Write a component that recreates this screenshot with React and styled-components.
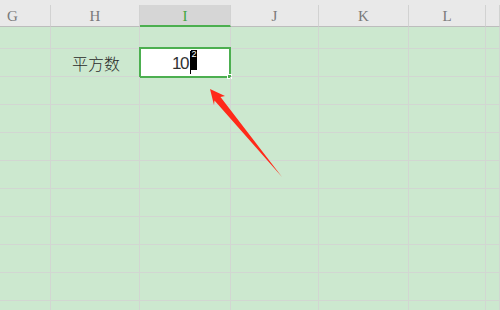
import React from "react";
import styled, { createGlobalStyle } from "styled-components";

const Global = createGlobalStyle`
  html, body { margin: 0; padding: 0; background: #cce8cf; }
  body { width: 500px; height: 310px; overflow: hidden; }
`;

const Sheet = styled.div`
  position: relative;
  width: 500px;
  height: 310px;
  overflow: hidden;
  background: #cce8cf;
  display: flex;
  flex-direction: column;
`;

const TopStrip = styled.div`
  height: 5px;
  background: #e9e9e9;
  flex: none;
`;

const HeaderRow = styled.div`
  display: flex;
  height: 22px;
  flex: none;
  background: #e9e9e9;
`;

const HeaderCell = styled.div`
  box-sizing: border-box;
  width: ${(p) => (p.$w ? `${p.$w}px` : "auto")};
  flex: ${(p) => (p.$w ? "none" : "1")};
  border-right: 1px solid #d2d2d2;
  border-bottom: ${(p) => (p.$active ? "2px solid #4caf50" : "1px solid #bdbdbd")};
  background: ${(p) => (p.$active ? "#d6d6d6" : "#e9e9e9")};
  color: ${(p) => (p.$active ? "#3fa63f" : "#7a7a7a")};
  font-family: "Liberation Serif", "DejaVu Serif", serif;
  font-size: 15px;
  line-height: 20px;
  display: flex;
  align-items: center;
  justify-content: ${(p) => (p.$left ? "flex-start" : "center")};
  padding-left: ${(p) => (p.$left ? "7px" : "0")};
  padding-top: 1px;
`;

const Row = styled.div`
  display: flex;
  flex: none;
  height: ${(p) => p.$h}px;
`;

const Cell = styled.div`
  position: relative;
  box-sizing: border-box;
  width: ${(p) => (p.$w ? `${p.$w}px` : "auto")};
  flex: ${(p) => (p.$w ? "none" : "1")};
  border-right: 1px solid #d2d6d2;
  border-bottom: 1px solid #d2d6d2;
  display: flex;
  align-items: center;
  justify-content: center;
`;

const Label = styled.span`
  font-family: "Noto Sans CJK SC", "Noto Sans", sans-serif;
  font-size: 16px;
  font-weight: 300;
  color: #2a2a2a;
  margin-left: 2px;
  margin-top: 1px;
`;

const Selection = styled.div`
  position: absolute;
  left: -1px;
  top: -2px;
  width: 92px;
  height: 31px;
  box-sizing: border-box;
  border: 2px solid #4caf50;
  background: #ffffff;
  display: flex;
  align-items: flex-end;
  justify-content: flex-end;
  padding: 0 32px 4px 0;
`;

const Handle = styled.div`
  position: absolute;
  right: -3px;
  bottom: -3px;
  width: 5px;
  height: 5px;
  background: #4caf50;
  border: 1px solid #ffffff;
  box-sizing: border-box;
`;

const Value = styled.span`
  font-family: "Liberation Sans", Arial, sans-serif;
  font-size: 17px;
  letter-spacing: -1.5px;
  color: #333333;
  line-height: 17px;
  margin-right: 2px;
`;

const Caret = styled.span`
  width: 1px;
  height: 23px;
  background: #000;
  margin-bottom: -2px;
`;

const Sup = styled.span`
  width: 6px;
  height: 20px;
  background: #000;
  color: #fff;
  font-family: "Liberation Sans", Arial, sans-serif;
  font-size: 9px;
  line-height: 9px;
  text-align: center;
  align-self: flex-start;
  margin-top: 1px;
`;

const ArrowLayer = styled.svg`
  position: absolute;
  left: 0;
  top: 0;
  width: 500px;
  height: 310px;
  pointer-events: none;
`;

const cols = [
  { key: "G", w: 51, left: true },
  { key: "H", w: 89 },
  { key: "I", w: 91, active: true },
  { key: "J", w: 88 },
  { key: "K", w: 90 },
  { key: "L", w: 77 },
  { key: "M" },
];

const rowHeights = [22, 28, 28, 28, 28, 28, 28, 28, 28, 28, 28];

export default function App() {
  return (
    <>
      <Global />
      <Sheet>
        <TopStrip />
        <HeaderRow>
          {cols.map((c) => (
            <HeaderCell key={c.key} $w={c.w} $active={c.active} $left={c.left}>
              {c.key === "M" ? "" : c.key}
            </HeaderCell>
          ))}
        </HeaderRow>
        {rowHeights.map((h, r) => (
          <Row key={r} $h={h}>
            {cols.map((c) => (
              <Cell key={c.key} $w={c.w}>
                {r === 1 && c.key === "H" && <Label>平方数</Label>}
                {r === 1 && c.key === "I" && (
                  <Selection>
                    <Value>10</Value>
                    <Caret />
                    <Sup>2</Sup>
                    <Handle />
                  </Selection>
                )}
              </Cell>
            ))}
          </Row>
        ))}
        <ArrowLayer viewBox="0 0 500 310">
          <polygon
            points="210,89 225,96 220.5,97 282,177 214.5,100.5 214,105"
            fill="#ff2a1a"
          />
        </ArrowLayer>
      </Sheet>
    </>
  );
}
